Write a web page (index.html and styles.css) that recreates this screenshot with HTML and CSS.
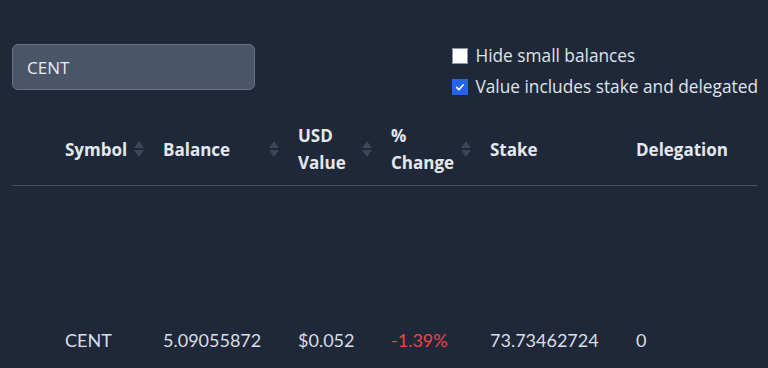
FILE: index.html
```html
<!DOCTYPE html>
<html lang="en">

<head>
    <meta charset="UTF-8">
    <meta name="viewport" content="width=device-width, initial-scale=1.0">
    <title>Wallet Balances</title>
    <link rel="stylesheet" href="styles.css">
</head>

<body>
    <div class="toolbar">
        <input type="text" class="search-input" value="CENT">
        <div class="options">
            <label class="option">
                <span class="box"></span>
                Hide small balances
            </label>
            <label class="option">
                <span class="box checked">
                    <svg viewBox="0 0 16 16" width="12" height="12"><path d="M3.5 8.5l3 3 6-6.5" fill="none" stroke="#fff" stroke-width="2.2" stroke-linecap="round" stroke-linejoin="round"/></svg>
                </span>
                Value includes stake and delegated
            </label>
        </div>
    </div>

    <table class="balances">
        <thead>
            <tr>
                <th class="col-icon"></th>
                <th class="col-symbol"><div class="th-inner"><span>Symbol</span><svg class="sort" viewBox="0 0 12 18"><path d="M6 1L11 8H1z M6 17L11 10H1z" fill="#3b4658"/></svg></div></th>
                <th class="col-balance"><div class="th-inner"><span>Balance</span><svg class="sort" viewBox="0 0 12 18"><path d="M6 1L11 8H1z M6 17L11 10H1z" fill="#3b4658"/></svg></div></th>
                <th class="col-usd"><div class="th-inner"><span>USD<br>Value</span><svg class="sort" viewBox="0 0 12 18"><path d="M6 1L11 8H1z M6 17L11 10H1z" fill="#3b4658"/></svg></div></th>
                <th class="col-change"><div class="th-inner"><span>%<br>Change</span><svg class="sort" viewBox="0 0 12 18"><path d="M6 1L11 8H1z M6 17L11 10H1z" fill="#3b4658"/></svg></div></th>
                <th class="col-stake"><div class="th-inner"><span>Stake</span></div></th>
                <th class="col-deleg"><div class="th-inner"><span>Delegation</span></div></th>
            </tr>
        </thead>
        <tbody>
            <tr>
                <td></td>
                <td>CENT</td>
                <td>5.09055872</td>
                <td>$0.052</td>
                <td class="down">-1.39%</td>
                <td>73.73462724</td>
                <td>0</td>
            </tr>
        </tbody>
    </table>
</body>

</html>
```

FILE: styles.css
```css
body {
    margin: 0;
    background-color: #1f2838;
    color: #e2e6ec;
    font-family: "Open Sans", sans-serif;
    height: 368px;
    overflow: hidden;
}

.toolbar {
    display: flex;
    justify-content: space-between;
    padding: 44px 10px 0 12px;
}

.search-input {
    width: 243px;
    height: 46px;
    box-sizing: border-box;
    background-color: #4a5567;
    border: 1px solid #67728a;
    border-radius: 6px;
    color: #e8ecf2;
    font-family: "Open Sans", sans-serif;
    font-size: 17px;
    padding: 0 14px;
    outline: none;
}

.options {
    display: flex;
    flex-direction: column;
    gap: 7px;
}

.option {
    display: flex;
    align-items: center;
    gap: 7px;
    font-size: 17.3px;
    line-height: 24px;
    color: #dfe4ea;
}

.box {
    width: 16px;
    height: 16px;
    box-sizing: border-box;
    background-color: #fff;
    border: 1px solid #8a93a3;
    display: flex;
    align-items: center;
    justify-content: center;
}

.box.checked {
    background-color: #2563eb;
    border-color: #2563eb;
}

.balances {
    margin: 18px 11px 0 12px;
    width: 745px;
    border-collapse: collapse;
    table-layout: fixed;
}

.balances th,
.balances td {
    box-sizing: border-box;
}

.col-icon { width: 41px; }
.col-symbol { width: 98px; }
.col-balance { width: 135px; }
.col-usd { width: 93px; }
.col-change { width: 99px; }
.col-stake { width: 146px; }

.balances th {
    height: 68px;
    padding: 0 6px 3px 12px;
    text-align: left;
    font-size: 17px;
    font-weight: 700;
    line-height: 27px;
    color: #e4e8ee;
    border-bottom: 1px solid #475264;
}

.th-inner {
    display: flex;
    justify-content: space-between;
    align-items: center;
}

.sort {
    width: 12px;
    height: 18px;
    flex: none;
}

.balances td {
    padding: 143px 12px 0;
    vertical-align: top;
    font-family: "Lato", sans-serif;
    font-size: 18px;
    line-height: 22px;
    color: #d9dee6;
}

.balances td.down {
    color: #ef4444;
}
```
